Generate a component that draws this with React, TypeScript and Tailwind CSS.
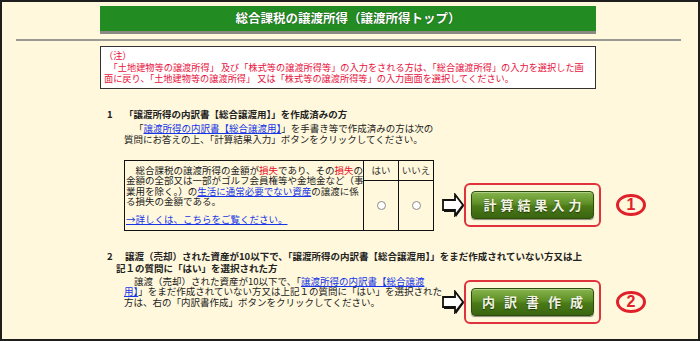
import React from "react";

function Arrow() {
  return (
    <svg width="22" height="24" viewBox="0 0 22 24" className="block shrink-0">
      <polygon points="2,8 14,8 14,2 22,13 14,24 14,19 2,19" fill="#111" />
      <polygon
        points="1,7 13,7 13,1.5 21,12 13,22.5 13,17 1,17"
        fill="#fff"
        stroke="#111"
        strokeWidth="1.8"
        strokeLinejoin="miter"
      />
    </svg>
  );
}

function GreenButton({ label, track }: { label: string; track: "wide" | "narrow" }) {
  return (
    <div className="flex h-[44px] w-[137px] shrink-0 items-center justify-center rounded-[6px] border-2 border-[#e0323c]">
      <div className="flex h-[28px] w-[123px] items-center justify-center rounded-[4px] border border-[#2c4d0c] bg-[linear-gradient(to_bottom,#86b54c_0%,#5e8f27_45%,#4a7a18_55%,#3a6510_100%)] shadow-[0_1px_1px_rgba(0,0,0,0.45),inset_0_1px_0_rgba(255,255,255,0.35)]">
        {track === "wide" ? (
          <span className="mr-[-4px] text-[13px] font-bold leading-none tracking-[4px] text-[#f2f3e4] [text-shadow:0_1px_1px_#1e3806]">
            {label}
          </span>
        ) : (
          <span className="mr-[-9px] text-[13px] font-bold leading-none tracking-[9px] text-[#f2f3e4] [text-shadow:0_1px_1px_#1e3806]">
            {label}
          </span>
        )}
      </div>
    </div>
  );
}

function Circled({ n }: { n: string }) {
  return (
    <span className="ml-[15px] inline-flex h-[22px] w-[30px] shrink-0 items-center justify-center rounded-[50%] border-[3px] border-[#e0202a] font-['Liberation_Sans',sans-serif] text-[16px] font-bold leading-none text-[#e0202a]">
      {n}
    </span>
  );
}

function Radio() {
  return <span className="block h-[9px] w-[9px] rounded-full border border-[#8a8a8a] bg-white" />;
}

export default function App() {
  const link = "text-[#1434e6] underline underline-offset-[1px]";
  const red = "text-[#e8102a]";
  return (
    <div className="h-[341px] w-[700px] overflow-hidden border-2 border-[#1e1e1e] bg-[#fff8dc] font-['Noto_Sans_CJK_JP','Noto_Sans',sans-serif] text-[#222]">
      {/* title bar */}
      <div className="ml-[98px] mt-[4px] flex h-[25px] w-[496px] items-center justify-center bg-[#228b22] shadow-[0_3px_0_#8a8a82]">
        <h1 className="text-[12.5px] font-bold leading-none text-white [text-shadow:0_0_1px_#0c3d0c]">
          総合課税の譲渡所得（譲渡所得トップ）
        </h1>
      </div>

      {/* rule */}
      <div className="ml-[14px] mt-[8px] h-[2px] w-[665px] bg-[#9a9a94]" />

      {/* note */}
      <div className="ml-[98px] mt-[5px] h-[43px] w-[496px] whitespace-nowrap border border-[#333] bg-white pl-[3px] pt-[3px] text-[9.2px] leading-[11.5px] text-[#e8103c]">
        <div>（注）</div>
        <div>　「土地建物等の譲渡所得」 及び「株式等の譲渡所得等」の入力をされる方は、「総合譲渡所得」の入力を選択した画</div>
        <div>面に戻り、「土地建物等の譲渡所得」 又は「株式等の譲渡所得等」の入力画面を選択してください。</div>
      </div>

      {/* section 1 */}
      <section className="ml-[105px] mt-[20px] text-[9.5px]">
        <h2 className="whitespace-nowrap font-bold leading-[11px]">
          <span className="inline-block w-[17px]">1</span>「譲渡所得の内訳書【総合譲渡用】」を作成済みの方
        </h2>
        <div className="ml-[17px]">
          <p className="mt-[3px] whitespace-nowrap indent-[10px] leading-[11.4px]">
            「<span className={link}>譲渡所得の内訳書【総合譲渡用】</span>」を手書き等で作成済みの方は次の
            <br />
            質問にお答えの上、「計算結果入力」ボタンをクリックしてください。
          </p>
          <div className="mt-[14px] flex items-end">
            <div className="grid h-[71px] w-[310px] shrink-0 grid-cols-[239px_35px_34px] grid-rows-[20px_1fr] border border-[#111]">
              <div className="row-span-2 whitespace-nowrap border-r border-[#111] pl-[1px] pt-[4px] leading-[10.4px]">
                <p className="indent-[9.5px]">
                  総合課税の譲渡所得の金額が<span className={red}>損失</span>であり、その
                  <span className={red}>損失</span>の
                  <br />
                  金額の全部又は一部がゴルフ会員権等や金地金など（事
                  <br />
                  業用を除く。）の<span className={link}>生活に通常必要でない資産</span>の譲渡に係
                  <br />
                  る損失の金額である。
                </p>
                <p className="mt-[8px]">
                  <span className={link}>→詳しくは、こちらをご覧ください。</span>
                </p>
              </div>
              <div className="flex items-center justify-center border-b border-r border-[#111] text-[#333]">はい</div>
              <div className="flex items-center justify-center border-b border-[#111] text-[#333]">いいえ</div>
              <div className="flex items-center justify-center border-r border-[#111]">
                <Radio />
              </div>
              <div className="flex items-center justify-center">
                <Radio />
              </div>
            </div>
            <div className="mb-[4px] ml-[8px] flex items-center">
              <Arrow />
              <GreenButton label="計算結果入力" track="wide" />
              <Circled n="1" />
            </div>
          </div>
        </div>
      </section>

      {/* section 2 */}
      <section className="ml-[105px] mt-[19px] text-[9.5px]">
        <h2 className="whitespace-nowrap pl-[9px] -indent-[9px] font-bold leading-[12px]">
          <span className="inline-block w-[18px] indent-0">2</span>譲渡（売却）された資産が10以下で、「譲渡所得の内訳書【総合譲渡用】」をまだ作成されていない方又は上
          <br />
          記１の質問に「はい」を選択された方
        </h2>
        <div className="ml-[17px] mt-[2px] flex items-start">
          <p className="w-[310px] shrink-0 whitespace-nowrap indent-[10px] leading-[10.5px]">
            譲渡（売却）された資産が10以下で、「<span className={link}>譲渡所得の内訳書【総合譲渡</span>
            <br />
            <span className={link}>用】</span>」をまだ作成されていない方又は上記１の質問に「はい」を選択された
            <br />
            方は、右の「内訳書作成」ボタンをクリックしてください。
          </p>
          <div className="ml-[8px] mt-[4px] flex items-center">
            <Arrow />
            <GreenButton label="内訳書作成" track="narrow" />
            <Circled n="2" />
          </div>
        </div>
      </section>
    </div>
  );
}
